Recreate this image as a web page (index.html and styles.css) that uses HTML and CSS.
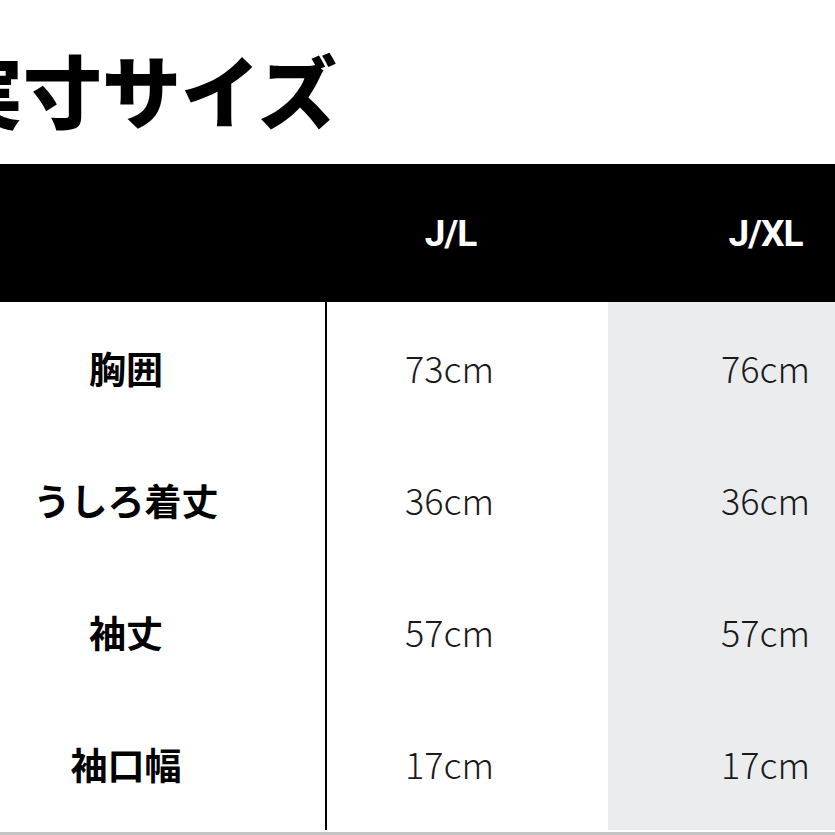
FILE: index.html
```html
<!DOCTYPE html>
<html lang="ja">
<head>
<meta charset="utf-8">
<link rel="stylesheet" href="styles.css">
</head>
<body>
<div class="page">
  <div class="title-wrap"><h1 class="title">実寸サイズ</h1></div>
  <div class="head">
    <div class="hcell"></div>
    <div class="hcell c2">J/L</div>
    <div class="hcell c3">J/XL</div>
  </div>
  <div class="grid">
    <div class="label">胸囲</div><div class="val c2">73cm</div><div class="val c3 alt">76cm</div>
    <div class="label">うしろ着丈</div><div class="val c2">36cm</div><div class="val c3 alt">36cm</div>
    <div class="label">袖丈</div><div class="val c2">57cm</div><div class="val c3 alt">57cm</div>
    <div class="label">袖口幅</div><div class="val c2">17cm</div><div class="val c3 alt">17cm</div>
  </div>
  <div class="gap"></div>
  <div class="rule"></div>
</div>
</body>
</html>
```

FILE: styles.css
```css
html, body {
  margin: 0;
  padding: 0;
  background: #fff;
}
.page {
  width: 835px;
  height: 835px;
  overflow: hidden;
  font-family: "Noto Sans CJK JP", "Noto Sans", sans-serif;
  color: #000;
}
.title-wrap {
  height: 164px;
  display: flex;
  align-items: center;
  overflow: visible;
}
.title {
  margin: 12px 0 0 -56px;
  font-size: 79px;
  line-height: 79px;
  font-weight: 900;
  letter-spacing: 0;
  white-space: nowrap;
}
.head {
  display: grid;
  grid-template-columns: 327px 281px 315px;
  height: 138px;
  background: #000;
  width: 923px;
}
.hcell {
  display: flex;
  align-items: center;
  justify-content: center;
  color: #fff;
  font-family: Roboto, "Noto Sans", sans-serif;
  font-weight: 700;
  font-size: 37px;
  letter-spacing: -1px;
}
.head .c2 { padding-right: 34px; }
.grid {
  display: grid;
  grid-template-columns: 327px 281px 315px;
  grid-auto-rows: 132px;
  width: 923px;
}
.label {
  border-right: 2px solid #000;
  display: flex;
  align-items: center;
  justify-content: center;
  padding-right: 73px;
  font-weight: 700;
  font-size: 37px;
}
.val {
  display: flex;
  align-items: center;
  justify-content: center;
  font-weight: 300;
  font-size: 36px;
  color: #1a1a1a;
  padding-bottom: 2px;
}
.val.c2 { padding-right: 36px; }
.alt {
  background: #ebecee;
  padding-right: 0;
}
.gap { height: 2px; }
.rule {
  height: 3px;
  background: #c4c4c4;
}
```
